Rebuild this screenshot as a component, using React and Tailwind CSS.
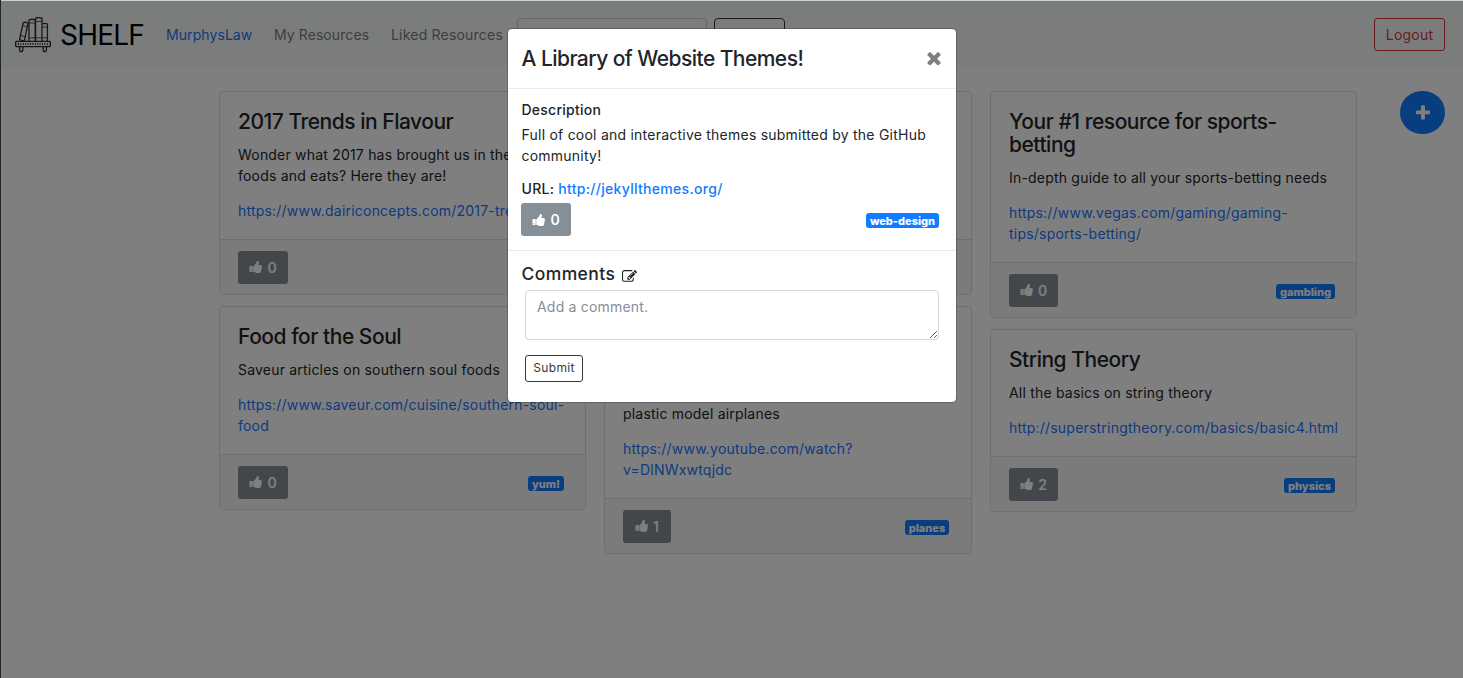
import React from "react";

const FA = {
  thumb:
    "M320 1344q0-26-19-45t-45-19q-27 0-45.5 19t-18.5 45q0 27 18.5 45.5t45.5 18.5q26 0 45-18.5t19-45.5zm160-512v640q0 26-19 45t-45 19h-288q-26 0-45-19t-19-45v-640q0-26 19-45t45-19h288q26 0 45 19t19 45zm1184 0q0 86-55 149 15 44 15 76 3 76-43 137 17 56 0 117-15 57-54 94 9 112-49 181-64 76-197 78h-129q-66 0-144-15.5t-121.5-29-120.5-39.5q-123-43-158-44-26-1-45-19.5t-19-44.5v-641q0-25 18-43.5t43-20.5q24-2 76-59t101-121q68-87 101-120 18-18 31-48t17.5-48.5 13.5-60.5q7-39 12.5-61t19.5-52 34-50q19-19 45-19 46 0 82.5 10.5t60 26 40 40.5 24 45 12 50 5 45 .5 39q0 38-9.5 76t-19 60-27.5 56q-3 6-10 18t-11 22-8 24h277q78 0 135 57t57 135z",
  times:
    "M1490 1322q0 40-28 68l-136 136q-28 28-68 28t-68-28l-294-294-294 294q-28 28-68 28t-68-28l-136-136q-28-28-28-68t28-68l294-294-294-294q-28-28-28-68t28-68l136-136q28-28 68-28t68 28l294 294 294-294q28-28 68-28t68 28l136 136q28 28 28 68t-28 68l-294 294 294 294q28 28 28 68z",
  plus:
    "M1600 736v192q0 40-28 68t-68 28h-416v416q0 40-28 68t-68 28h-192q-40 0-68-28t-28-68v-416h-416q-40 0-68-28t-28-68v-192q0-40 28-68t68-28h416v-416q0-40 28-68t68-28h192q40 0 68 28t28 68v416h416q40 0 68 28t28 68z",
  edit:
    "M888 1184l116-116-152-152-116 116v56h96v96h56zm440-720q-16-16-33 1l-350 350q-17 17-1 33t33-1l350-350q17-17 1-33zm80 594v190q0 119-84.5 203.5t-203.5 84.5h-832q-119 0-203.5-84.5t-84.5-203.5v-832q0-119 84.5-203.5t203.5-84.5h832q63 0 117 25 15 7 18 23 3 17-9 29l-49 49q-14 14-32 8-23-6-45-6h-832q-66 0-113 47t-47 113v832q0 66 47 113t113 47h832q66 0 113-47t47-113v-126q0-13 9-22l64-64q15-15 35-7t20 29zm-96-738l288 288-672 672h-288v-288zm444 132l-92 92-288-288 92-92q28-28 68-28t68 28l152 152q28 28 28 68t-28 68z",
};

function Icon({ name, className }) {
  return (
    <svg viewBox="0 0 1792 1792" fill="currentColor" className={className} aria-hidden="true">
      <path d={FA[name]} />
    </svg>
  );
}

function Logo() {
  return (
    <svg viewBox="0 0 36 36" className="h-9 w-9 shrink-0" fill="none" stroke="#2e2e2e" strokeWidth="1.3" strokeLinejoin="round" aria-hidden="true">
      <rect x="0.7" y="24.4" width="34.6" height="5.2" rx="0.8" strokeWidth="1.4" />
      <path d="M3 27h30" strokeWidth="2.2" strokeDasharray="1 1.4" />
      <path d="M4.6 29.800v2.600q0 2.200 1.600 2.200t1.600-2.200v-2.600M28.200 29.800v2.600q0 2.200 1.600 2.200t1.600-2.200v-2.600" />
      <path d="M8.200 5.600q2.400-.9 4.800.5L9.500 23.400q-2.500.7-4.900-.9z" />
      <path d="M7.700 8.600l5 1.200M5.700 18.600l4.800 1.200" strokeWidth="0.8" />
      <path d="M14 24.300V3q3-1.500 6.200 0v21.300" />
      <path d="M14 6h6.200M14 20.800h6.200" strokeWidth="0.8" />
      <path d="M20.600 24.300V1.200q3.200-1.300 6.400 0v23.100" />
      <path d="M20.600 4.400h6.400M20.600 20.800h6.400" strokeWidth="0.8" />
      <path d="M27.200 7q2.500-1.200 5.200 0v17.300" />
      <path d="M27.200 10h5.200M27.200 20.800h5.200" strokeWidth="0.8" />
    </svg>
  );
}

function LikeButton({ count, className = "" }) {
  return (
    <button className={`flex h-[33px] items-center justify-center rounded-[3px] bg-[#868e96] text-[14px] leading-[21px] font-semibold text-white ${className}`}>
      <Icon name="thumb" className="mr-1 h-[14px] w-[14px]" />
      {count}
    </button>
  );
}

function Badge({ children, className = "" }) {
  return (
    <span className={`flex h-[15px] items-center justify-center rounded-[3px] bg-[#107cff] pt-[2px] text-[11px] leading-none font-extrabold text-white ${className}`}>
      {children}
    </span>
  );
}

function Card({ title, text, url, count, tag, tagClass, titleClass = "", textClass = "", likeClass = "w-[50px]" }) {
  return (
    <article className="overflow-hidden rounded-[4px] border border-[#dfdfdf] bg-white">
      <div className="px-[18px] pt-[18px] pb-[18px]">
        <h4 className={`mb-[11px] text-[21px] leading-[23px] font-medium tracking-[-0.48px] whitespace-pre-line ${titleClass}`}>{title}</h4>
        <p className={`mb-[14px] text-[14px] leading-[21px] tracking-[0.2px] whitespace-pre-line ${textClass}`}>{text}</p>
        <a className="block text-[14px] leading-[21px] tracking-[0.21px] whitespace-pre text-[#1a75ff]">{url}</a>
      </div>
      <div className="flex h-[55px] items-center justify-between border-t border-[#dfdfdf] bg-[#f7f7f7] pr-[21px] pl-[18px]">
        <LikeButton count={count} className={likeClass} />
        {tag && <Badge className={`mt-[3px] ${tagClass}`}>{tag}</Badge>}
      </div>
    </article>
  );
}

function Navbar() {
  return (
    <nav className="flex h-[67px] items-start bg-[#f7fbf9] pr-[18px] pl-[15px]">
      <div className="flex h-[67px] items-center pt-[2px]">
        <Logo />
        <span className="ml-[9px] w-[84px] text-[28px] leading-[42px] tracking-[-0.8px] text-black">SHELF</span>
      </div>
      <div className="flex h-[67px] items-center pt-[2px] text-[14px] leading-[21px] tracking-[0.15px] text-[#7c7c7c]">
        <a className="ml-[22px] w-[87px] tracking-[0.08px] whitespace-nowrap text-[#1a75ff]">MurphysLaw</a>
        <a className="ml-[21px] w-[96px] tracking-[0.08px] whitespace-nowrap">My Resources</a>
        <a className="ml-[21px] w-[113px] tracking-[0.2px] whitespace-nowrap">Liked Resources</a>
      </div>
      <div className="mt-[18px] ml-[13px] h-[33px] w-[190px] rounded-[4px] border border-[#c9cbcb]" />
      <div className="mt-[18px] ml-[7px] h-[33px] w-[71px] rounded-[4px] border border-[#343a40]" />
      <button className="mt-[18px] ml-auto h-[33px] w-[71px] rounded-[3px] border border-[#dc3545] text-[14px] tracking-[0.2px] text-[#dc3545]">Logout</button>
    </nav>
  );
}

function Modal() {
  return (
    <section className="mt-[28px] ml-[507px] h-[375px] w-[450px] rounded-[5px] border border-black/20 bg-white bg-clip-padding">
      <header className="flex h-[60px] items-center justify-between border-b border-[#e9ecef] pr-[12px] pl-[13.5px]">
        <h4 className="text-[21px] leading-[31px] font-medium tracking-[-0.55px]">A Library of Website Themes!</h4>
        <Icon name="times" className="mb-px h-[20px] w-[20px] text-[#7f7f7f]" />
      </header>
      <div className="h-[162px] border-b border-[#e9ecef] px-[13.5px] pt-[10px] text-[14px] leading-[21px]">
        <h6 className="mb-[4px] font-medium tracking-[0.25px]">Description</h6>
        <p className="mb-[12px] tracking-[0.23px] whitespace-pre-line">{"Full of cool and interactive themes submitted by the GitHub\ncommunity!"}</p>
        <p className="mb-[4px] font-medium tracking-[0.3px]">
          URL: <a className="text-[#107cff]">http://jekyllthemes.org/</a>
        </p>
        <div className="-ml-[0.5px] flex items-center justify-between pr-[3.5px]">
          <LikeButton count="0" className="w-[50px]" />
          <Badge className="mt-[2px] w-[73px]">web-design</Badge>
        </div>
      </div>
      <div className="px-[14px] pt-[13px]">
        <h5 className="-ml-[0.5px] flex items-center text-[17.5px] leading-[20px] font-medium tracking-[0.4px]">
          Comments
          <Icon name="edit" className="mt-[5px] ml-[7px] h-[15px] w-[15px]" />
        </h5>
        <textarea
          placeholder="Add a comment."
          className="mt-[6px] ml-[3px] block h-[50px] w-[414px] resize rounded-[4px] border border-[#d5d7d9] px-[11px] py-[5px] text-[14px] leading-[21px] tracking-[0.2px] placeholder:text-[#868e96]"
        />
        <button className="mt-[15px] ml-[3px] block h-[27px] w-[58px] rounded-[3px] border border-[#343a40] pb-px text-[12px] leading-[18px] tracking-[0.3px] text-[#343a40]">Submit</button>
      </div>
    </section>
  );
}

export default function App() {
  return (
    <div className="relative h-[678px] w-[1463px] overflow-hidden bg-white font-['Inter','Liberation_Sans',sans-serif] text-[#212529]">
      <Navbar />
      <main className="flex items-start pt-[24px] pl-[219px]">
        <div className="flex w-[1138px] gap-[18px]">
          <div className="flex w-[367px] flex-col gap-[11px]">
            <Card
              title="2017 Trends in Flavour"
              titleClass="tracking-[-0.41px]"
              text={"Wonder what 2017 has brought us in the\nfoods and eats? Here they are!"}
              url="https://www.dairiconcepts.com/2017-trends"
              count="0"
            />
            <Card
              title="Food for the Soul"
              text="Saveur articles on southern soul foods"
              url={"https://www.saveur.com/cuisine/southern-soul-\nfood"}
              count="0"
              tag="yum!"
              tagClass="w-[36px]"
            />
          </div>
          <div className="flex w-[368px] flex-col gap-[11px]">
            <Card titleClass="h-[23px]" textClass="h-[42px]" url=" " count="0" />
            <Card
              titleClass="h-[46px]"
              textClass="pt-[21px]"
              text="plastic model airplanes"
              url={"https://www.youtube.com/watch?\nv=DlNWxwtqjdc"}
              count="1"
              tag="planes"
              tagClass="mr-px w-[44px]"
              likeClass="w-[48px]"
            />
          </div>
          <div className="flex w-[367px] flex-col gap-[11px]">
            <Card
              title={"Your #1 resource for sports-\nbetting"}
              text="In-depth guide to all your sports-betting needs"
              url={"https://www.vegas.com/gaming/gaming-\ntips/sports-betting/"}
              count="0"
              tag="gambling"
              tagClass="w-[59px]"
              likeClass="w-[49px]"
            />
            <Card
              title="String Theory"
              text="All the basics on string theory"
              url="http://superstringtheory.com/basics/basic4.html"
              count="2"
              tag="physics"
              tagClass="w-[51px]"
              likeClass="w-[49px]"
            />
          </div>
        </div>
        <button className="ml-[43px] flex h-[43px] w-[45px] items-center justify-center rounded-full bg-[#107cff] text-white">
          <Icon name="plus" className="h-[18px] w-[18px]" />
        </button>
      </main>
      <div className="absolute inset-0 bg-black/50">
        <Modal />
      </div>
      <div className="absolute inset-x-0 top-0 h-px bg-[#ccd0ce]" />
      <div className="absolute inset-y-0 left-0 w-px bg-[#23252d]" />
    </div>
  );
}
